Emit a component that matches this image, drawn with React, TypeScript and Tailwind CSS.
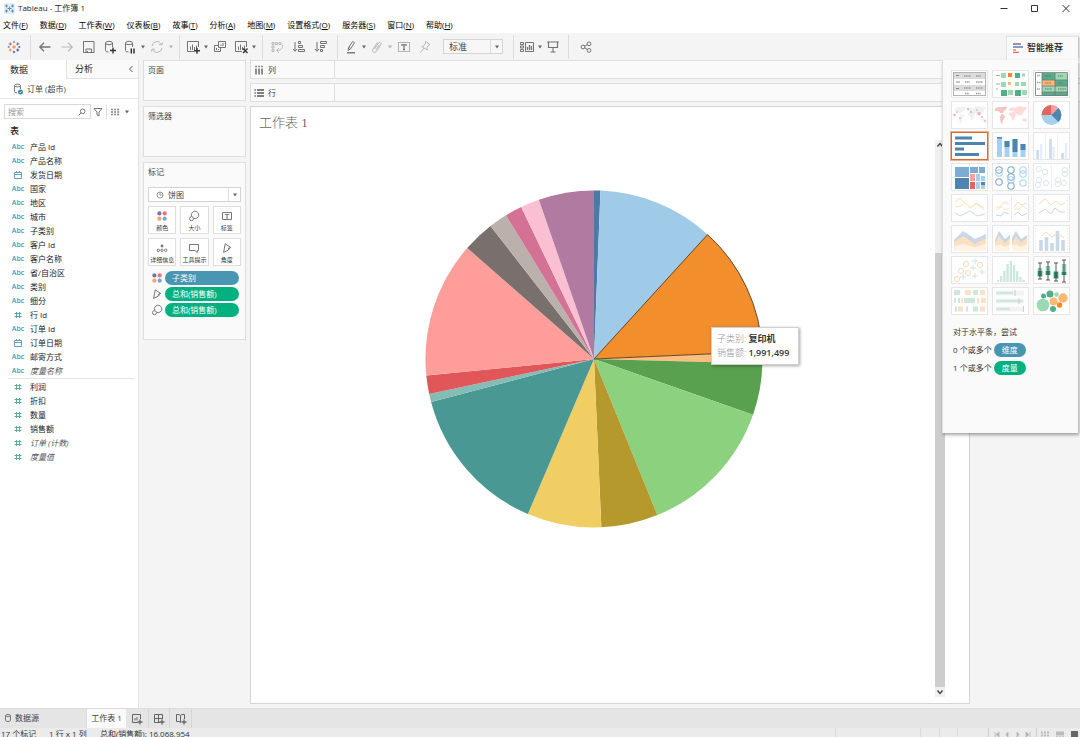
import { useState, type ReactNode } from "react";
import clsx from "clsx";

type Field = { name: string; type: "abc" | "date" | "num"; italic?: boolean };

const menus = [
  ["文件", "F"],
  ["数据", "D"],
  ["工作表", "W"],
  ["仪表板", "B"],
  ["故事", "T"],
  ["分析", "A"],
  ["地图", "M"],
  ["设置格式", "O"],
  ["服务器", "S"],
  ["窗口", "N"],
  ["帮助", "H"],
];

const dimensions: Field[] = [
  { name: "产品 Id", type: "abc" },
  { name: "产品名称", type: "abc" },
  { name: "发货日期", type: "date" },
  { name: "国家", type: "abc" },
  { name: "地区", type: "abc" },
  { name: "城市", type: "abc" },
  { name: "子类别", type: "abc" },
  { name: "客户 Id", type: "abc" },
  { name: "客户名称", type: "abc" },
  { name: "省/自治区", type: "abc" },
  { name: "类别", type: "abc" },
  { name: "细分", type: "abc" },
  { name: "行 Id", type: "num" },
  { name: "订单 Id", type: "abc" },
  { name: "订单日期", type: "date" },
  { name: "邮寄方式", type: "abc" },
  { name: "度量名称", type: "abc", italic: true },
];

const measures: Field[] = [
  { name: "利润", type: "num" },
  { name: "折扣", type: "num" },
  { name: "数量", type: "num" },
  { name: "销售额", type: "num" },
  { name: "订单 (计数)", type: "num", italic: true },
  { name: "度量值", type: "num", italic: true },
];

// End angle of each slice in degrees, clockwise from 12 o'clock
const slices = [
  { end: 2.2, color: "#4e79a7" },
  { end: 42.4, color: "#a0cbe8" },
  { end: 87.5, color: "#f28e2b", selected: true },
  { end: 91.5, color: "#ffbe7d" },
  { end: 109.3, color: "#59a14f" },
  { end: 157.9, color: "#8cd17d" },
  { end: 177.5, color: "#b6992d" },
  { end: 203.1, color: "#f1ce63" },
  { end: 255.2, color: "#499894" },
  { end: 258, color: "#86bcb6" },
  { end: 264.4, color: "#e15759" },
  { end: 311.2, color: "#ff9d9a" },
  { end: 322.1, color: "#79706e" },
  { end: 328.5, color: "#bab0ac" },
  { end: 334.4, color: "#d37295" },
  { end: 340.9, color: "#fabfd2" },
  { end: 360, color: "#b07aa1" },
];

function Icon({ size = 14, className, children }: { size?: number; className?: string; children: ReactNode }) {
  return (
    <svg
      width={size}
      height={size}
      viewBox={`0 0 ${size} ${size}`}
      fill="none"
      stroke="currentColor"
      strokeWidth="1"
      className={clsx("shrink-0", className)}
      aria-hidden="true"
    >
      {children}
    </svg>
  );
}

function Caret({ faded }: { faded?: boolean }) {
  return (
    <svg width="6" height="14" viewBox="0 0 6 14" className={clsx("shrink-0", faded ? "text-[#b5b5b5]" : "text-[#666]")} aria-hidden="true">
      <path d="M1 5.5h4L3 8.5z" fill="currentColor" />
    </svg>
  );
}

function Tool({ label, wide, faded, children }: { label: string; wide?: boolean; faded?: boolean; children: ReactNode }) {
  return (
    <button
      type="button"
      aria-label={label}
      className={clsx("flex h-full shrink-0 items-center justify-center", wide ? "w-[22px]" : "w-5", faded ? "text-[#b9b9b9]" : "text-[#737373]")}
    >
      {children}
    </button>
  );
}

function ToolGroup({ children }: { children: ReactNode }) {
  return <div className="flex h-6 items-center border-r border-[#dcdcdc] pr-[5px] pl-[3px]">{children}</div>;
}

function TableauMark() {
  const plus = (x: number, y: number, r: number, color: string) => (
    <path d={`M${x - r} ${y}h${r * 2}M${x} ${y - r}v${r * 2}`} stroke={color} />
  );
  return (
    <Icon size={14}>
      {plus(7, 7, 2, "#eb8a44")}
      {plus(3.3, 4, 1.5, "#e0584f")}
      {plus(10.7, 4, 1.5, "#4f7fae")}
      {plus(3.3, 10, 1.5, "#e8964f")}
      {plus(10.7, 10, 1.5, "#43608c")}
      {plus(7, 2, 1.2, "#6aa4b5")}
      {plus(7, 12, 1.2, "#48639c")}
      {plus(1.7, 7, 1, "#6a93c6")}
      {plus(12.3, 7, 1, "#a64f63")}
    </Icon>
  );
}

function Dots() {
  return (
    <Icon size={12}>
      <g stroke="none">
        <circle cx="3.4" cy="3.4" r="2.1" fill="#82719c" />
        <circle cx="8.7" cy="3.4" r="2.1" fill="#f4707b" />
        <circle cx="3.4" cy="8.7" r="2.1" fill="#f5a571" />
        <circle cx="8.7" cy="8.7" r="2.1" fill="#7ba3d0" />
      </g>
    </Icon>
  );
}

function SizeIcon() {
  return (
    <Icon size={12} className="text-[#777]">
      <path d="M3.6 6.3A3.7 3.7 0 1 1 6 8.5" />
      <circle cx="3.5" cy="8.7" r="2" />
    </Icon>
  );
}

function AngleIcon() {
  return (
    <Icon size={12} className="text-[#777]">
      <path d="M4.2 1.8 9.6 5.4 7.2 8.2 2.6 10.4z" />
      <path d="M9.6 5.4Q6.8 5.6 7.2 8.2" />
    </Icon>
  );
}

function MiniBars() {
  return <path d="M4.5 10V6.5M6.5 10V4.5M8.5 10V7M10.5 10V5.5" />;
}

function Toolbar() {
  return (
    <div className="flex h-[27px] shrink-0 items-center bg-[#f4f4f4]">
      <button type="button" aria-label="开始页面" className="flex w-7 shrink-0 items-center justify-center">
        <TableauMark />
      </button>
      <div className="h-6 w-[3px] border-r border-[#dcdcdc]" />
      <ToolGroup>
        <Tool label="撤消" wide>
          <Icon>
            <path d="M12.5 7H2M6 2.7 1.8 7 6 11.3" strokeWidth="1.3" />
          </Icon>
        </Tool>
        <Tool label="重做" wide faded>
          <Icon>
            <path d="M1.5 7H12M8 2.7 12.2 7 8 11.3" strokeWidth="1.2" />
          </Icon>
        </Tool>
        <Tool label="保存" wide>
          <Icon>
            <path d="M1.5 1.5h10.5v11H1.5zM4 12.5V9h5.5v3.5M5.5 11v1.5" />
          </Icon>
        </Tool>
        <Tool label="新建数据源">
          <Icon>
            <path d="M2.5 3v7.5q0 1.5 3 1.5M9.5 3v4M2.5 3q0-1.7 3.5-1.7T9.5 3 6 4.7 2.5 3z" />
            <path d="M7 10.5h6M10 7.5v6" stroke="#333" strokeWidth="1.4" />
          </Icon>
        </Tool>
        <Tool label="暂停自动更新">
          <Icon>
            <path d="M2.5 3v7.5q0 1.5 3 1.5M9.5 3v4M2.5 3q0-1.7 3.5-1.7T9.5 3 6 4.7 2.5 3z" />
            <path d="M8.3 8.5v5M11 8.5v5" stroke="#333" strokeWidth="1.5" />
          </Icon>
        </Tool>
        <Caret />
        <Tool label="运行更新" wide faded>
          <Icon>
            <path d="M2 6a5 5 0 0 1 9.5-1.5M12 8a5 5 0 0 1-9.5 1.5M12.8 2.5 11.8 5 9 4.3M1.2 11.5l1-2.5 2.7.7" />
          </Icon>
        </Tool>
        <Caret faded />
      </ToolGroup>
      <ToolGroup>
        <Tool label="新建工作表">
          <Icon>
            <path d="M8 11.5H1.5v-10h11V7" />
            <MiniBars />
            <path d="M8 10.7h6M11 7.7v6" stroke="#333" strokeWidth="1.4" />
          </Icon>
        </Tool>
        <Caret />
        <Tool label="复制" wide>
          <Icon>
            <path d="M5.5 1.5h7v6h-7zM5.5 5.5h-4v6h6v-4M8 6V4.5M10 6V3M3.5 10V8M5.5 10V9" />
          </Icon>
        </Tool>
        <Tool label="清除工作表">
          <Icon>
            <path d="M8 11.5H1.5v-10h11V7" />
            <MiniBars />
            <path d="m9 8.5 4.5 4.5m0-4.5L9 13" stroke="#333" strokeWidth="1.4" />
          </Icon>
        </Tool>
        <Caret />
      </ToolGroup>
      <ToolGroup>
        <Tool label="交换行和列" wide faded>
          <Icon>
            <path d="M2 2.5h2v2H2zM5.5 2.5h2v2h-2zM9 2.5h2v2H9zM2 6h2v2H2zM2 9.5h2v2H2zM12.5 5c0 4-2 5.5-5.5 5.5M9 8l-2.3 2.5L9 12.8" />
          </Icon>
        </Tool>
        <Tool label="升序排序" wide>
          <Icon>
            <path d="M3 2v9M1 9l2 2.3L5 9M6.5 1.5h2v2h-2zM6.5 5.5h4v2h-4zM6.5 9.5h6v2h-6z" />
          </Icon>
        </Tool>
        <Tool label="降序排序" wide>
          <Icon>
            <path d="M3 2v9M1 9l2 2.3L5 9M6.5 1.5h6v2h-6zM6.5 5.5h4v2h-4zM6.5 9.5h2v2h-2z" />
          </Icon>
        </Tool>
      </ToolGroup>
      <ToolGroup>
        <Tool label="突出显示">
          <Icon>
            <path d="M3 12.8h8" strokeWidth="1.4" />
            <path d="m4 10.5.8-3.2L8.5 1.5l2 1.2-3.8 6zM4.8 7.3l2 1.3" />
          </Icon>
        </Tool>
        <Caret />
        <Tool label="组成员" faded>
          <Icon>
            <path d="M4.5 9 8.5 3a1.5 1.5 0 0 1 2.5 1.6L6.3 11.5a2 2 0 0 1-3.4-2.2L7.5 2.4M6 9.8 9.5 4.7" />
          </Icon>
        </Tool>
        <Caret faded />
        <Tool label="显示标记标签" wide>
          <Icon>
            <path d="M1.5 2.5h11v9h-11z" strokeDasharray="1 1" />
            <path d="M4.8 5.8v-1h4.4v1M7 4.8v5M6 9.7h2" strokeWidth="1.2" />
          </Icon>
        </Tool>
        <Tool label="固定轴" faded>
          <Icon>
            <path d="m7.5 1.5 4.5 3-1.5.5-1.5 2.7.2 2.3-5.5-3.5 2.2-.7 1.6-2.6zM6 8l-3.5 4.5" />
          </Icon>
        </Tool>
        <div className="relative mr-[5px] ml-2 flex h-[15px] w-[60px] items-center border border-[#d4d4d4] bg-[#f7f7f7]">
          <select aria-label="适合" className="h-full w-full appearance-none pl-[5px] text-[9px] leading-3 text-[#444] outline-none">
            <option>标准</option>
            <option>整个视图</option>
          </select>
          <span className="pointer-events-none absolute inset-y-0 right-0 flex w-3 items-center justify-center border-l border-[#dedede]">
            <Caret />
          </span>
        </div>
      </ToolGroup>
      <ToolGroup>
        <Tool label="显示/隐藏功能区">
          <Icon>
            <path d="M5.5 2.5h8v9h-8zM.5 2.5h3v2h-3zM.5 6h3v2h-3zM.5 9.5h3v2h-3z" />
            <path d="M7.5 10V7M9.5 10V5M11.5 10V6" strokeWidth="1.3" />
          </Icon>
        </Tool>
        <Caret />
        <Tool label="演示模式">
          <Icon>
            <path d="M1 2h12M2.5 2v5.5h9V2M7 7.5v4M4.5 12h5" strokeWidth="1.1" />
          </Icon>
        </Tool>
      </ToolGroup>
      <div className="pl-1.5">
        <Tool label="共享" wide>
          <Icon>
            <circle cx="4" cy="7" r="1.9" />
            <circle cx="10" cy="3.8" r="1.9" />
            <circle cx="10" cy="10.4" r="1.9" />
            <path d="m5.7 6.1 2.6-1.4M5.7 7.9l2.6 1.5" />
          </Icon>
        </Tool>
      </div>
    </div>
  );
}

function FieldIcon({ type, measure }: { type: Field["type"]; measure?: boolean }) {
  if (type === "abc") {
    return <span className="w-3.5 text-center text-[7px] font-semibold text-[#4a93ad]">Abc</span>;
  }
  return (
    <span className={clsx("flex w-3.5 justify-center", measure ? "text-[#5fb092]" : "text-[#5f9fb6]")}>
      {type === "date" ? (
        <Icon size={8}>
          <path d="M.5 1.5h7v6h-7zM.5 3.5h7M2.5 0v1.5M5.5 0v1.5" />
        </Icon>
      ) : (
        <Icon size={8}>
          <path d="M2.5 1v6M5.5 1v6M.5 2.5h7M.5 5.5h7" />
        </Icon>
      )}
    </span>
  );
}

function FieldRow({ field, measure }: { field: Field; measure?: boolean }) {
  return (
    <li className={clsx("flex h-3.5 items-center gap-[5px]", measure ? "pl-[3px]" : "pl-[11px]")}>
      <FieldIcon type={field.type} measure={measure} />
      <span className={clsx("text-[8px] leading-3", field.italic ? "text-[#555] italic" : "text-[#222]")}>{field.name}</span>
    </li>
  );
}

function DataPane() {
  const [query, setQuery] = useState("");
  const match = (f: Field) => f.name.includes(query);

  return (
    <aside className="flex w-[139px] shrink-0 flex-col border-r border-[#e3e3e3] bg-white">
      <div className="flex h-[19px] text-[9px] text-[#222]">
        <button type="button" className="w-[66px] pl-2.5 text-left">
          数据
        </button>
        <div className="flex flex-1 items-center justify-between border-b border-l border-[#e3e3e3] bg-[#fafafa] pr-1 pl-2">
          <button type="button">分析</button>
          <button type="button" aria-label="最小化" className="text-[#555]">
            <Icon size={6}>
              <path d="M4.5 0 1.5 3l3 3" />
            </Icon>
          </button>
        </div>
      </div>
      <div className="flex h-5 items-center gap-[3px] border-b border-[#e6e6e6] pl-3 text-[8px] text-[#444]">
        <Icon size={12} className="text-[#777]">
          <path d="M2.5 2.5v6q0 1.3 2.5 1.5M8.5 2.5V6M2.5 2.5Q2.5 1.2 5.5 1.2t3 1.3-3 1.3-3-1.3z" />
          <circle cx="8.5" cy="9" r="2.5" fill="#3a88a8" stroke="none" />
          <path d="m7.3 9 .9.9 1.5-1.7" stroke="#fff" strokeWidth=".7" />
        </Icon>
        订单 (超市)
      </div>
      <div className="mt-[5px] flex h-[15px] items-center pl-1">
        <div className="flex h-full w-[87px] items-center border border-[#d9d9d9] pr-1 pl-[3px]">
          <input
            aria-label="搜索字段"
            value={query}
            onChange={(e) => setQuery(e.target.value)}
            placeholder="搜索"
            className="w-full min-w-0 flex-1 text-[8px] leading-3 outline-none placeholder:text-[#999]"
          />
          <Icon size={8} className="text-[#777]">
            <circle cx="4.7" cy="3.3" r="2.3" />
            <path d="M3 5 .7 7.3" />
          </Icon>
        </div>
        <button type="button" aria-label="筛选" className="ml-0.5 text-[#777]">
          <Icon size={10}>
            <path d="M1 1.5h8L6 5v4L4 8V5z" />
          </Icon>
        </button>
        <button type="button" aria-label="视图" className="ml-[3px] flex items-center gap-[5px] border-l border-[#ddd] pl-1 text-[#888]">
          <Icon size={8}>
            <path d="M0 1.5h8M0 4h8M0 6.5h8" strokeDasharray="2 1" strokeWidth="1.5" />
          </Icon>
          <Caret />
        </button>
      </div>
      <h2 className="mt-1.5 pl-2.5 text-[9px] leading-3 font-medium text-[#222]">表</h2>
      <ul className="mt-[3px]">
        {dimensions.filter(match).map((f) => (
          <FieldRow key={f.name} field={f} />
        ))}
      </ul>
      <ul className="mr-1 ml-2 border-t border-[#e3e3e3] pt-px">
        {measures.filter(match).map((f) => (
          <FieldRow key={f.name} field={f} measure />
        ))}
      </ul>
    </aside>
  );
}

function Card({ title, className, children }: { title: string; className?: string; children?: ReactNode }) {
  return (
    <section className={clsx("border border-[#dedede] bg-[#fafafa] px-1", className)}>
      <h2 className="text-[8px] leading-[18px] text-[#444]">{title}</h2>
      {children}
    </section>
  );
}

const markButtons = [
  { label: "颜色", icon: <Dots /> },
  { label: "大小", icon: <SizeIcon /> },
  {
    label: "标签",
    icon: (
      <Icon size={12} className="text-[#777]">
        <path d="M1.5 2.5h9v7h-9zM4 5v-.5h4V5M6 4.5v3.3M5 8h2" />
      </Icon>
    ),
  },
  {
    label: "详细信息",
    icon: (
      <Icon size={12} className="text-[#777]">
        <circle cx="6" cy="4" r="1.4" fill="currentColor" stroke="none" />
        <circle cx="2.3" cy="8.3" r="1.2" />
        <circle cx="6" cy="8.3" r="1.2" />
        <circle cx="9.7" cy="8.3" r="1.2" />
      </Icon>
    ),
  },
  {
    label: "工具提示",
    icon: (
      <Icon size={12} className="text-[#777]">
        <path d="M1.5 2.5h9v6H9.3v2.2L7 8.5H1.5z" />
      </Icon>
    ),
  },
  { label: "角度", icon: <AngleIcon /> },
];

const pills = [
  { text: "子类别", measure: false, icon: <Dots /> },
  { text: "总和(销售额)", measure: true, icon: <AngleIcon /> },
  { text: "总和(销售额)", measure: true, icon: <SizeIcon /> },
];

function Cards() {
  return (
    <div className="ml-1 flex w-[103px] shrink-0 flex-col gap-[5px]">
      <Card title="页面" className="h-[41px]" />
      <Card title="筛选器" className="h-[51px]" />
      <Card title="标记" className="h-[178px]">
        <div className="relative mt-1.5 flex h-[15px] items-center border border-[#d4d4d4] bg-white pl-[7px]">
          <Icon size={8} className="text-[#999]">
            <circle cx="4" cy="4" r="3" />
            <path d="M4 1v3h3" />
          </Icon>
          <select aria-label="标记类型" className="h-full flex-1 appearance-none pl-1 text-[8px] leading-3 text-[#444] outline-none">
            <option>饼图</option>
            <option>条形图</option>
          </select>
          <span className="pointer-events-none absolute inset-y-0 right-0 flex w-3 items-center justify-center border-l border-[#dedede]">
            <Caret />
          </span>
        </div>
        <div className="mt-1 grid grid-cols-3 gap-1">
          {markButtons.map((b) => (
            <button
              key={b.label}
              type="button"
              className="flex h-7 flex-col items-center gap-0.5 border border-[#dedede] bg-white pt-[3px] text-[6px] leading-[9px] whitespace-nowrap text-[#333]"
            >
              {b.icon}
              {b.label}
            </button>
          ))}
        </div>
        <ul className="mt-[5px] mr-0.5 ml-[3px] flex flex-col gap-0.5">
          {pills.map((p, i) => (
            <li key={i} className="flex items-center gap-0.5">
              {p.icon}
              <button
                type="button"
                className={clsx(
                  "h-3.5 flex-1 rounded-full pl-[7px] text-left text-[8px] leading-3 text-white",
                  p.measure ? "bg-[#00b180]" : "bg-[#4996b2]",
                )}
              >
                {p.text}
              </button>
            </li>
          ))}
        </ul>
      </Card>
    </div>
  );
}

function Shelf({ label, children }: { label: string; children: ReactNode }) {
  return (
    <div className="flex h-[19px] shrink-0 border border-r-0 border-[#dedede] bg-[#fafafa]">
      <div className="flex w-[84px] items-center gap-1 border-r border-[#dedede] pl-[3px] text-[8px] text-[#444]">
        <Icon size={10} className="text-[#555]">
          {children}
        </Icon>
        {label}
      </div>
    </div>
  );
}

function PieChart() {
  const c = 169;
  const r = 168.5;
  const at = (deg: number) => {
    const a = (deg * Math.PI) / 180;
    return `${(c + r * Math.sin(a)).toFixed(2)} ${(c - r * Math.cos(a)).toFixed(2)}`;
  };
  const paths = slices.map((s, i) => {
    const start = i === 0 ? 0 : slices[i - 1].end;
    return { ...s, d: `M${c} ${c}L${at(start)}A${r} ${r} 0 0 1 ${at(s.end)}Z` };
  });
  const selected = paths.find((p) => p.selected);

  return (
    <svg width="338" height="338" viewBox="0 0 338 338" role="img" aria-label="按子类别的销售额">
      {paths.map((p) => (
        <path key={p.color} d={p.d} fill={p.color} />
      ))}
      {selected && <path d={selected.d} fill="none" stroke="#3d2c18" strokeWidth="0.8" strokeLinejoin="round" />}
    </svg>
  );
}

function Worksheet() {
  return (
    <main className="ml-1 flex min-w-0 flex-1 flex-col gap-1 pb-1">
      <Shelf label="列">
        <path d="M2 3.5v6M5 3.5v6M8 3.5v6M1.4 1.5h1.3M4.4 1.5h1.3M7.4 1.5h1.3" strokeWidth="1.3" />
      </Shelf>
      <Shelf label="行">
        <path d="M3 2h7M3 5h7M3 8h7M.5 2h1.3M.5 5h1.3M.5 8h1.3" strokeWidth="1.3" />
      </Shelf>
      <section className="mr-[110px] flex min-h-0 flex-1 border border-[#d4d4d4] bg-white">
        <div className="flex min-w-0 flex-1 flex-col">
          <h1 className="pt-1.5 pl-2 font-['Liberation_Serif','Noto_Sans_CJK_SC',serif] text-[13px] leading-5 font-light text-[#666]">
            工作表 1
          </h1>
          <div className="flex justify-center pt-[57px] pl-0.5">
            <div className="relative">
              <PieChart />
              <div
                role="tooltip"
                className="absolute top-[137px] left-[286px] w-[88px] border border-[#d0d0d0] bg-white py-1 pl-[5px] text-[9px] leading-3.5 whitespace-nowrap text-[#333] shadow-[1px_1px_3px_rgba(0,0,0,0.35)]"
              >
                <div>
                  <span className="font-light text-[#999]">子类别: </span>
                  <b className="font-bold">复印机</b>
                </div>
                <div>
                  <span className="font-light text-[#999]">销售额: </span>
                  <b className="font-semibold">1,991,499</b>
                </div>
              </div>
            </div>
          </div>
        </div>
        <div className="mt-[33px] mr-6 mb-1.5 flex w-2.5 flex-col items-center bg-[#f0f0f0] text-[#444]">
          <Icon size={10}>
            <path d="m2.5 6.5 2.5-3 2.5 3" strokeWidth="1.4" />
          </Icon>
          <div className="mt-[103px] w-full flex-1 bg-[#cdcdcd]" />
          <Icon size={10}>
            <path d="m2.5 3.5 2.5 3 2.5-3" strokeWidth="1.4" />
          </Icon>
        </div>
      </section>
    </main>
  );
}

const WORLD =
  "M4 8l3-2 6 0 2 1-2 2-2 1-1 2-2 0-1-2-3 0zM11 6l3-1 1 2-2 1zM9 13l3 1 1 2-2 3-1 4-1-1-1-5zM17 9l1-2 3-1 1 2-2 2-2 0zM17 12l4-1 3 2-1 3-2 4-1-1-1-4-2-1zM22 7l5-2 7 1 1 2-2 1-1 2-2 2-1 2-2-2-1 2-1-2-3-1-1-3zM30 18l3-1 2 2-1 2-3-1z";

type Thumb = { label: string; art: ReactNode };

const thumbs: Thumb[] = [
  {
    label: "文本表",
    art: (
      <>
        <rect x="2.5" y="2.5" width="32" height="23" fill="#fff" stroke="#b3b3b3" />
        <path d="M3 6h31M3 18h31" stroke="#dcdcdc" strokeWidth="6" />
        <path d="M5 5.5h3M5 12h4M5 18.5h3" stroke="#888" />
        <path d="M13 6h7M25 6h5M14 12h5M25 12h7M13 18h7M25 18h7M14 23.5h4M25 23.5h5" stroke="#9a9a9a" strokeWidth="1.6" strokeDasharray="1.2 .5" />
      </>
    ),
  },
  {
    label: "热图",
    art: (
      <>
        <path d="M4 5.5h4M4 14h4M4 19h2" stroke="#aaa" />
        <path d="M9 3h5v5H9zM30 3.5h3v3h-3zM9 12h5v5H9zM23 12h4v4h-4zM29 12h5v4h-5zM16 20h5v5h-5zM30 20h5v5h-5z" fill="#9bd9b3" />
        <path d="M23 3h5v5h-5zM9 20h6v6H9zM23 20h6v6h-6z" fill="#53ad88" />
        <path d="M16 3h4v4h-4z" fill="#f58b1f" />
        <path d="M16 12h3v3h-3z" fill="#fdb874" />
      </>
    ),
  },
  {
    label: "突出显示表",
    art: (
      <>
        <path d="M9 3h13v7H9zM22 10h13v6H22zM9 22h13v4H9zM22 22h13v4H22z" fill="#53ad88" />
        <path d="M22 3h13v7H22zM9 16h26v6H9z" fill="#9bd9b3" />
        <path d="M9 10h13v6H9z" fill="#fdb874" />
        <path d="M2.5 2.5h32v23h-32zM9 3v22M22 3v22M9 10h26M9 16h26M9 22h26" fill="none" stroke="#777" strokeWidth=".8" />
        <path d="M4 5.5h3M4 12.5h4M4 19h3M12 6h6M25 6h5M12 13h6M25 13h5M12 19h7M25 19h8" stroke="#666" strokeOpacity=".6" strokeWidth="1.4" strokeDasharray="1.2 .5" />
      </>
    ),
  },
  {
    label: "符号地图",
    art: (
      <>
        <path d={WORLD} fill="#f1f1f1" />
        <g fill="#edb9ba">
          <circle cx="3.5" cy="14" r="1.3" />
          <circle cx="17" cy="8" r="1.2" />
          <circle cx="20" cy="11" r="1.2" />
          <circle cx="28" cy="12.5" r="1.8" />
          <circle cx="31" cy="16" r="1" />
          <circle cx="9" cy="17" r="1" />
          <circle cx="34" cy="20" r="1" />
          <circle cx="26" cy="9" r="1" />
          <circle cx="6" cy="11" r="1" />
        </g>
      </>
    ),
  },
  {
    label: "地图",
    art: (
      <>
        <path d={WORLD} fill="#fbdcdb" />
        <path d="M3 7l5-1 6 0 1 1-3 3-1 2-3 0-2-2-3 0zM9 13l3 1 1 2-2 3-1 4-1-1-1-5z" fill="#f3c5c3" />
      </>
    ),
  },
  {
    label: "饼图",
    art: (
      <>
        <circle cx="18.5" cy="14" r="10" fill="#a5d0ef" />
        <path d="M18.5 14V4a10 10 0 0 0-10 10z" fill="#e2645c" />
        <path d="M18.5 14V4a10 10 0 0 1 7 3z" fill="#ff9f9b" />
        <path d="m18.5 14 7-7a10 10 0 0 1 0 14z" fill="#4f84ae" />
      </>
    ),
  },
  {
    label: "水平条",
    art: <path d="M4 6h17M4 11.5h30M4 17h9M4 22.5h24" stroke="#4f84ae" strokeWidth="2.8" />,
  },
  {
    label: "堆叠条",
    art: (
      <>
        <path d="M7.5 5v20M15 9v16M23 7v18M31 12v13" stroke="#a5d0ef" strokeWidth="5" />
        <path d="M7.5 5v1.5M15 9v6M23 7v13M31 12v6" stroke="#4f84ae" strokeWidth="5" />
      </>
    ),
  },
  {
    label: "并排条",
    art: (
      <>
        <path d="M12.5 2v24M24.5 2v24" stroke="#eee" />
        <path d="M4.5 18v9M17.5 7v20M29.5 21v6" stroke="#cbdbe8" strokeWidth="2.6" />
        <path d="M8 12v15M20.5 15v12M33 11v16" stroke="#e3f0fa" strokeWidth="2.6" />
      </>
    ),
  },
  {
    label: "树状图",
    art: (
      <>
        <path d="M4 4h14v10H4z" fill="#7badd2" />
        <path d="M4 15h14v11H4z" fill="#4f84ae" />
        <path d="M19 4h8v6h-8zM28 4h6v6h-6z" fill="#7badd2" />
        <path d="M19 11h5v7h-5z" fill="#ff9f9b" />
        <path d="M19 19h5v7h-5z" fill="#e2645c" />
        <path d="M25 11h4v7h-4zM30 13h4v5h-4zM25 19h4v7h-4zM30 22h4v4h-4z" fill="#a5d0ef" />
        <path d="M30 19h4v3h-4z" fill="#4f84ae" />
      </>
    ),
  },
  {
    label: "圆视图",
    art: (
      <g fill="none" strokeWidth="1.1">
        <g stroke="#7ea9cb">
          <circle cx="7" cy="7" r="3.2" />
          <circle cx="19" cy="7" r="3.2" />
          <circle cx="7" cy="19" r="3.2" />
          <circle cx="19" cy="14" r="3.2" />
          <circle cx="19" cy="23" r="3.2" />
        </g>
        <g stroke="#add4f0">
          <circle cx="7" cy="10" r="3.2" />
          <circle cx="31" cy="7" r="3.2" />
          <circle cx="31" cy="11" r="3.2" />
          <circle cx="19" cy="17" r="3.2" />
          <circle cx="31" cy="20" r="3.2" />
        </g>
      </g>
    ),
  },
  {
    label: "并排圆",
    art: (
      <g fill="none" stroke="#dbe9f3">
        <path d="M18.5 2v24" stroke="#eee" />
        <circle cx="6" cy="6" r="2.6" />
        <circle cx="12" cy="9" r="2.6" />
        <circle cx="6" cy="17" r="2.6" />
        <circle cx="5" cy="22" r="2.6" />
        <circle cx="13" cy="20" r="2.6" />
        <circle cx="32" cy="7" r="2.6" />
        <circle cx="32" cy="11" r="2.6" />
        <circle cx="25" cy="17" r="2.6" />
        <circle cx="25" cy="21" r="2.6" />
        <circle cx="31" cy="20" r="2.6" />
      </g>
    ),
  },
  {
    label: "连续线",
    art: (
      <g fill="none">
        <path d="m4 8 5-4 10 10 6-5 8 5" stroke="#fddcbd" />
        <path d="m4 13 6-1 4-3 6 5 5-4 9 6" stroke="#fde8bf" />
        <path d="m4 19 5 3 10-5 7 5 8-2" stroke="#c9d8e6" />
      </g>
    ),
  },
  {
    label: "离散线",
    art: (
      <g fill="none">
        <path d="M19.5 2v24" stroke="#eee" />
        <path d="m4 13 4 0 4-5 5 2M22 13l4-5 3 3 6-2" stroke="#fddcbd" />
        <path d="m4 16 5-3 4 3 4-2M22 15l5 0 4-3 4 3" stroke="#fde8bf" />
        <path d="m4 21 5 1 3-4 5 2M22 21l4-3 4 4 5-3" stroke="#c9d8e6" />
      </g>
    ),
  },
  {
    label: "双线",
    art: (
      <g fill="none">
        <path d="M2.5 3v22M34.5 3v22" stroke="#e8e8e8" strokeDasharray="1 2" />
        <path d="m6 10 6-5 6 6 5-4 4 4 5-2" stroke="#fddcbd" />
        <path d="m6 19 6-4 6 5 4-6 5 4 5 0" stroke="#c9d8e6" />
      </g>
    ),
  },
  {
    label: "面积图 (连续)",
    art: (
      <>
        <path d="m3 15 9-9 12 8 11-5v17H3z" fill="#c9d8e6" />
        <path d="m3 17 9-6 12 8 11-6v13H3z" fill="#fde0c2" />
        <path d="m3 21 9-2 12 3 11-3v7H3z" fill="#fef3e4" />
      </>
    ),
  },
  {
    label: "面积图 (离散)",
    art: (
      <>
        <path d="m3 15 4-9 6 8 5-4v16H3zM20 13l4-7 5 8 6-4v16H20z" fill="#c9d8e6" />
        <path d="m3 18 4-7 6 7 5-5v13H3zM20 18l4-7 5 7 6-5v13H20z" fill="#fde0c2" />
        <path d="m3 21 5-2 5 3 5-3v7H3zM20 21l4-2 5 3 6-3v7H20z" fill="#fef3e4" />
      </>
    ),
  },
  {
    label: "双组合",
    art: (
      <>
        <path d="M2.5 3v22M34.5 3v22" stroke="#e8e8e8" strokeDasharray="1 2" />
        <path d="M8 15v11M13.5 12v14M19 18v8M24.5 6v20M30 15v11" stroke="#c9d8e6" strokeWidth="3.6" />
        <path d="m8 11 5-4 6 5 6-4 6 5" fill="none" stroke="#fdd9b5" />
      </>
    ),
  },
  {
    label: "散点图",
    art: (
      <g fill="none">
        <g stroke="#fcdcbb">
          <circle cx="15" cy="8" r="2.6" />
          <circle cx="10" cy="15" r="2.6" />
          <circle cx="17" cy="17" r="2.6" />
          <circle cx="29" cy="9" r="2.6" />
          <circle cx="6" cy="23" r="2.6" />
        </g>
        <path d="M21 5h6M24 2v6M19 12h6M22 9v6M28 16h6M31 13v6M9 21h6M12 18v6M21 20h6M24 17v6" stroke="#d0e8dc" />
      </g>
    ),
  },
  {
    label: "直方图",
    art: (
      <path
        d="M6 24v2M9.200 20v6M12.400 15v11M15.600 8v18M18.800 5v21M22 9v17M25.200 15v11M28.400 21v5M31.600 24v2"
        stroke="#cde8dc"
        strokeWidth="2.4"
      />
    ),
  },
  {
    label: "盒须图",
    art: (
      <>
        <path d="M7 12v9M15 10v9M23 15v8M31 8v10" stroke="#8fcfb2" strokeWidth="4.5" />
        <path d="M7 15v5M15 15v4M23 16v6M31 16v3" stroke="#2f8f6b" strokeWidth="4.5" />
        <path d="M7 7v16M15 6v18M23 7v18M31 4v22M5 7h4M13 6h4M21 7h4M29 4h4M5 23h4M13 24h4M21 25h4M29 26h4" stroke="#444" strokeWidth=".9" />
      </>
    ),
  },
  {
    label: "甘特图",
    art: (
      <>
        <path d="M3 5.5h6M18 5.5h2M22 5.5h5M3 13.5h2M7 13.5h2M13 13.5h11M4 22h2M15 22h2M22 22h5" stroke="#cde8dc" strokeWidth="5" />
        <path d="M14 5.5h6M29 5.5h5M10 13.5h2M26 13.5h2M30 13.5h5M7 22h5M29 22h5" stroke="#fde0c6" strokeWidth="5" />
      </>
    ),
  },
  {
    label: "靶心图",
    art: (
      <>
        <path d="M4 6h28M4 14h28M4 22h28" stroke="#f3f3f3" strokeWidth="5" />
        <path d="M4 6h17M4 14h27M4 22h14" stroke="#cde8dc" strokeWidth="2.6" />
        <path d="M23 3v6M27 11v6M31.5 19v6" stroke="#ccc" />
      </>
    ),
  },
  {
    label: "填充气泡图",
    art: (
      <>
        <circle cx="10" cy="18" r="6.3" fill="#9bd9b3" />
        <circle cx="17" cy="7" r="3.5" fill="#53ad88" />
        <circle cx="10.5" cy="9" r="2.5" fill="#53ad88" />
        <circle cx="23.5" cy="7.5" r="2.2" fill="#9bd9b3" />
        <circle cx="30" cy="11" r="4.7" fill="#fdb874" />
        <circle cx="20.5" cy="14.5" r="4" fill="#fdb874" />
        <circle cx="26.5" cy="18" r="2.7" fill="#f58b1f" />
        <circle cx="20" cy="22" r="3" fill="#53ad88" />
      </>
    ),
  },
];

function ShowMe() {
  const [active, setActive] = useState("水平条");

  return (
    <aside className="absolute top-9 right-0.5 flex w-[136px] flex-col items-end">
      <button
        type="button"
        className="flex h-6 w-[72px] items-center gap-1 border-t border-l border-[#e3e3e3] bg-[#fafafa] pb-0.5 pl-1.5 text-[9px] font-medium text-[#222] shadow-[2px_0_2px_-1px_rgba(0,0,0,0.3)]"
      >
        <Icon size={10}>
          <path d="M0 1h8" stroke="#8d7197" strokeWidth="1.6" />
          <path d="M0 4h10" stroke="#7c9fce" strokeWidth="2" />
          <path d="M0 7h3" stroke="#f2a66e" strokeWidth="2" />
          <path d="M0 9.500h6" stroke="#ef5b6c" strokeWidth="1.4" />
        </Icon>
        智能推荐
      </button>
      <div className="h-[373px] w-full border-l border-[#dedede] bg-[#fafafa] pt-2.5 pl-2 shadow-[1px_2px_3px_rgba(0,0,0,0.35)]">
        <div className="grid grid-cols-[37px_37px_37px] gap-x-1 gap-y-[3px]">
          {thumbs.map((t) => (
            <button
              key={t.label}
              type="button"
              aria-label={t.label}
              onClick={() => setActive(t.label)}
              className={clsx("h-7 border bg-white", t.label === active ? "border-[#e0672d] ring-1 ring-[#e0672d]/50" : "border-[#e6e6e6]")}
            >
              <svg viewBox="1 1 35 26" className="block h-full w-full">
                {t.art}
              </svg>
            </button>
          ))}
        </div>
        <div className="mt-2.5 flex flex-col gap-1 pl-0.5 text-[8px] leading-3.5 text-[#333]">
          <p>对于水平条，尝试</p>
          <p className="flex items-center gap-0.5">
            0 个或多个
            <span className="w-8 rounded-full bg-[#4996b2] text-center text-white">维度</span>
          </p>
          <p className="flex items-center gap-0.5">
            1 个或多个
            <span className="w-8 rounded-full bg-[#00b180] text-center text-white">度量</span>
          </p>
        </div>
      </div>
    </aside>
  );
}

function SheetTabs() {
  return (
    <div className="flex h-5 shrink-0 border-t border-[#dcdcdc] bg-[#e5e5e5] text-[8px] text-[#444]">
      <button type="button" className="flex w-[87px] items-center gap-0.5 border-r border-[#dcdcdc] pb-0.5 pl-[3px]">
        <Icon size={10} className="text-[#777]">
          <path d="M2.5 2.5v5q0 1 2.5 1t2.5-1v-5M2.5 2.5q0-1 2.5-1t2.5 1-2.5 1-2.5-1z" />
        </Icon>
        数据源
      </button>
      <button type="button" className="w-[39px] bg-[#fafafa] pb-0.5 text-center">
        工作表 1
      </button>
      <button type="button" aria-label="新建工作表" className="flex w-[23px] items-center justify-center border-r border-[#d6d6d6] text-[#666]">
        <Icon size={12}>
          <path d="M7 9.500H1.500v-8h8V6M4 7.500V5M6 7.500V4" />
          <path d="M6.500 9h5M9 6.500v5" strokeWidth="1.3" />
        </Icon>
      </button>
      <button type="button" aria-label="新建仪表板" className="flex w-[21px] items-center justify-center border-r border-[#d6d6d6] text-[#666]">
        <Icon size={12}>
          <path d="M7 9.500H1.500v-8h8V6M1.500 5.500h8M5.500 1.500v8" />
          <path d="M6.500 9h5M9 6.500v5" strokeWidth="1.3" />
        </Icon>
      </button>
      <button type="button" aria-label="新建故事" className="flex w-[22px] items-center justify-center border-r border-[#d6d6d6] text-[#666]">
        <Icon size={12}>
          <path d="M5.500 9.500 4 8.500H1.500v-7H4l1.500 1 1.500-1h2.500V6M5.500 2.500v7" />
          <path d="M6.500 9h5M9 6.500v5" strokeWidth="1.3" />
        </Icon>
      </button>
    </div>
  );
}

function StatusBar() {
  return (
    <footer className="flex h-[9px] shrink-0 items-start overflow-hidden bg-[#ebebeb] text-[8px] leading-3 text-[#333]">
      <span className="w-[49px] shrink-0 pl-px">17 个标记</span>
      <span className="w-[51px] shrink-0">1 行 x 1 列</span>
      <span className="flex-1">总和(销售额): 16,068,954</span>
      <span className="h-full w-[85px] border-l border-[#dadada]" />
      <span className="h-full w-[19px] border-l border-[#dadada]" />
      <span className="h-full w-[18px] border-l border-[#dadada]" />
      <span className="h-full w-[31px] border-l border-[#dadada]" />
      <div className="flex w-12 justify-evenly border-l border-[#ccc] pt-[3px] text-[#b5b5b5]">
        <Icon size={6}>
          <path d="M1 1v5M5 1 2 3.500 5 6z" fill="currentColor" strokeWidth=".8" />
        </Icon>
        <Icon size={6}>
          <path d="M4 1 2 3.500 4 6z" fill="currentColor" strokeWidth=".8" />
        </Icon>
        <Icon size={6}>
          <path d="m2 1 2 2.500L2 6z" fill="currentColor" strokeWidth=".8" />
        </Icon>
        <Icon size={6}>
          <path d="M5 1v5M1 1l3 2.500L1 6z" fill="currentColor" strokeWidth=".8" />
        </Icon>
      </div>
      <div className="flex w-11 justify-between border-l border-[#ccc] pt-[3px] pr-0.5 pl-1 text-[#bbb]">
        <Icon size={8}>
          <path d="M0 1.500h8M0 4.500h8" strokeWidth="2" strokeDasharray="2 1" />
        </Icon>
        <Icon size={8}>
          <path d="M0 2.500h8" strokeWidth="4" />
          <path d="M0 6h8" strokeWidth="1.5" strokeDasharray="2 1" />
        </Icon>
        <Icon size={8} className="text-[#666]">
          <path d="M1 4h7" strokeWidth="8" />
        </Icon>
      </div>
    </footer>
  );
}

export default function App() {
  return (
    <div className="relative flex h-screen flex-col overflow-hidden bg-[#f4f4f4] font-['Open_Sans','Noto_Sans_CJK_SC',sans-serif]">
      <header className="flex h-4 shrink-0 items-center bg-white pl-1 text-[#222]">
        <Icon size={11} className="text-[#5b8fb5]">
          <rect width="11" height="11" fill="#e3edf4" stroke="none" />
          <path d="M5.500 3.500v4M3.500 5.500h4M2.500 1.500v3M1 3h3M8.500 1.500v3M7 3h3M2.500 6.500v3M1 8h3M8.500 6.500v3M7 8h3" />
        </Icon>
        <span className="ml-[3px] flex-1 text-[8px]">Tableau - 工作簿 1</span>
        <div className="flex gap-[21px] pr-[9px] text-[#333]">
          <button type="button" aria-label="最小化窗口">
            <Icon size={10}>
              <path d="M1.500 5.500h7" />
            </Icon>
          </button>
          <button type="button" aria-label="最大化窗口">
            <Icon size={10}>
              <path d="M1.500 2.500h6v6h-6z" />
            </Icon>
          </button>
          <button type="button" aria-label="关闭窗口">
            <Icon size={10}>
              <path d="m1.500 2 7 7m0-7-7 7" />
            </Icon>
          </button>
        </div>
      </header>
      <nav className="flex h-[17px] shrink-0 items-center gap-3 bg-white pt-px pl-[3px] text-[8px] text-black">
        {menus.map(([name, key]) => (
          <button key={key} type="button" className="whitespace-nowrap">
            {name}(<u>{key}</u>)
          </button>
        ))}
      </nav>
      <Toolbar />
      <div className="flex min-h-0 flex-1">
        <DataPane />
        <Cards />
        <Worksheet />
      </div>
      <SheetTabs />
      <StatusBar />
      <ShowMe />
    </div>
  );
}
